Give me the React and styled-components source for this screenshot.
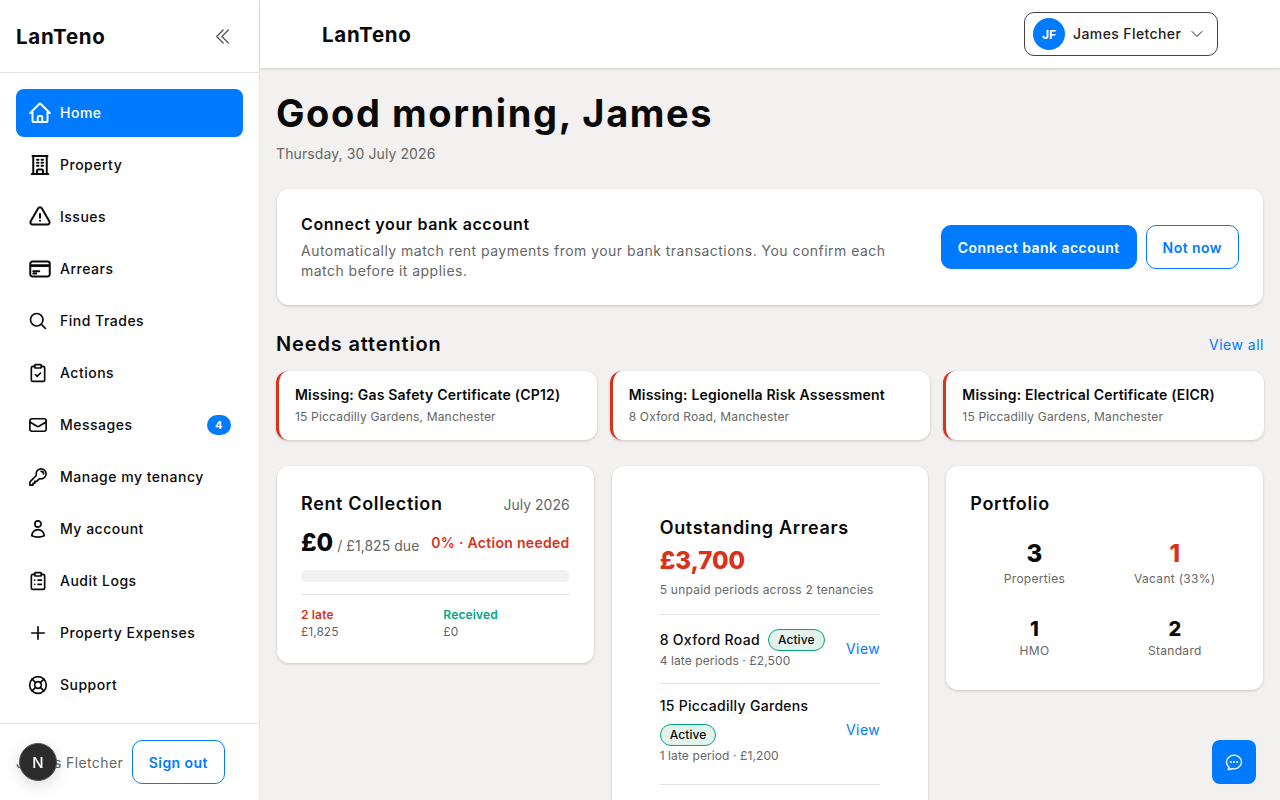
import React from "react";
import styled, { createGlobalStyle } from "styled-components";
import {
  HiOutlineHome,
  HiOutlineBuildingOffice,
  HiOutlineExclamationTriangle,
  HiOutlineCreditCard,
  HiOutlineMagnifyingGlass,
  HiOutlineEnvelope,
  HiOutlineKey,
  HiOutlineUser,
  HiOutlinePlus,
  HiOutlineChevronDoubleLeft,
  HiOutlineChevronDown,
  HiOutlineChatBubbleOvalLeftEllipsis,
} from "react-icons/hi2";
import { ClipboardCheck, ClipboardList, LifeBuoy } from "lucide-react";

const BLUE = "#007aff";
const RED = "#d9321c";
const GREEN = "#00a67e";
const INK = "#0a0a0a";
const MUTED = "#666666";
const LINE = "#e4e4e4";

const GlobalStyle = createGlobalStyle`
  html, body { margin: 0; height: 100%; overflow: hidden; }
  body {
    font-family: Inter, "Noto Sans", sans-serif;
    background: #f2f1ef;
    color: ${INK};
  }
  * { box-sizing: border-box; }
`;

const Shell = styled.div`
  display: flex;
  height: 100vh;
  overflow: hidden;
`;

const Sidebar = styled.aside`
  width: 260px;
  flex: none;
  background: #fff;
  border-right: 1px solid ${LINE};
  display: flex;
  flex-direction: column;
`;

const SideHead = styled.div`
  height: 73px;
  flex: none;
  border-bottom: 1px solid ${LINE};
  display: flex;
  align-items: center;
  justify-content: space-between;
  padding: 0 26px 0 16px;
  color: #555;
`;

const Logo = styled.div`
  font-size: 20.5px;
  font-weight: 700;
  letter-spacing: 0.75px;
  color: ${INK};
`;

const Nav = styled.nav`
  flex: 1;
  padding: 16px 16px 0;
  display: flex;
  flex-direction: column;
  gap: 4px;
`;

const NavItem = styled.a`
  height: 48px;
  flex: none;
  display: flex;
  align-items: center;
  padding: 0 12px;
  border-radius: 8px;
  font-size: 14px;
  font-weight: 450;
  letter-spacing: 0.5px;
  background: ${(p) => (p.$active ? BLUE : "transparent")};
  color: ${(p) => (p.$active ? "#fff" : INK)};
`;

const NavIcon = styled.span`
  width: 32px;
  flex: none;
  display: flex;
  align-items: center;
`;

const NavLabel = styled.span`
  flex: 1;
  padding-bottom: 1px;
  white-space: nowrap;
`;

const CountBadge = styled.span`
  width: 24px;
  height: 20px;
  border-radius: 10px;
  background: ${BLUE};
  color: #fff;
  font-size: 11px;
  font-weight: 700;
  display: flex;
  align-items: center;
  justify-content: center;
`;

const SideFoot = styled.div`
  height: 77px;
  flex: none;
  border-top: 1px solid ${LINE};
  display: flex;
  align-items: center;
  justify-content: space-between;
  padding: 0 34px 0 16px;
`;

const FootName = styled.span`
  font-size: 14px;
  letter-spacing: 0.4px;
  color: ${MUTED};
  white-space: nowrap;
`;

const OutlineButton = styled.button`
  height: 44px;
  padding: 0 16px;
  background: #fff;
  border: 1px solid ${BLUE};
  border-radius: 10px;
  color: ${BLUE};
  font: 600 14px Inter, sans-serif;
  letter-spacing: 0.45px;
  white-space: nowrap;
`;

const SolidButton = styled(OutlineButton)`
  background: ${BLUE};
  color: #fff;
`;

const DevBadge = styled.div`
  position: fixed;
  left: 19px;
  top: 743px;
  width: 38px;
  height: 38px;
  border-radius: 50%;
  background: #2b2b2b;
  border: 1px solid #555;
  color: #fff;
  font-size: 15px;
  font-weight: 500;
  display: flex;
  align-items: center;
  justify-content: center;
  box-shadow: 0 4px 16px rgba(0, 0, 0, 0.15);
`;

const ChatButton = styled.button`
  position: fixed;
  left: 1212px;
  top: 740px;
  width: 44px;
  height: 44px;
  border: 0;
  border-radius: 8px;
  background: ${BLUE};
  color: #fff;
  display: flex;
  align-items: center;
  justify-content: center;
  padding: 0;
`;

const Main = styled.div`
  flex: 1;
  min-width: 0;
  display: flex;
  flex-direction: column;
`;

const TopBar = styled.header`
  height: 68px;
  flex: none;
  background: #fff;
  box-shadow: 0 1px 3px rgba(0, 0, 0, 0.14);
  display: flex;
  align-items: center;
  justify-content: space-between;
  padding: 0 62px;
  position: relative;
`;

const UserMenu = styled.div`
  width: 194px;
  height: 44px;
  border: 1px solid #444;
  border-radius: 10px;
  display: flex;
  align-items: center;
  padding: 0 14px 0 8px;
  gap: 8px;
  font-size: 14px;
  font-weight: 450;
  letter-spacing: 0.4px;
  color: #222;
  svg { flex: none; }
`;

const Avatar = styled.span`
  width: 32px;
  height: 32px;
  flex: none;
  border-radius: 50%;
  background: ${BLUE};
  color: #fff;
  font-size: 12px;
  font-weight: 700;
  letter-spacing: 0;
  display: flex;
  align-items: center;
  justify-content: center;
`;

const Content = styled.main`
  flex: 1;
  min-height: 0;
  overflow: hidden;
  padding: 20px 16px 0;
`;

const Title = styled.h1`
  margin: 0;
  font-size: 38px;
  line-height: 50px;
  font-weight: 700;
  letter-spacing: 1.6px;
`;

const DateLine = styled.div`
  margin-top: 6px;
  font-size: 14px;
  line-height: 20px;
  letter-spacing: 0.1px;
  color: ${MUTED};
`;

const Card = styled.section`
  background: #fff;
  border-radius: 12px;
  box-shadow: 0 1px 3px rgba(0, 0, 0, 0.18);
`;

const BankCard = styled(Card)`
  margin: 25px 1px 0;
  height: 116px;
  padding: 0 24px;
  display: flex;
  align-items: center;
  gap: 40px;
`;

const BankText = styled.div`
  flex: 1;
`;

const BankTitle = styled.div`
  font-size: 16px;
  font-weight: 600;
  letter-spacing: 0.6px;
  margin-bottom: 7px;
`;

const BankBody = styled.div`
  font-size: 14px;
  line-height: 20px;
  letter-spacing: 0.47px;
  color: ${MUTED};
`;

const BankActions = styled.div`
  display: flex;
  gap: 9px;
  flex: none;
`;

const SectionHead = styled.div`
  margin-top: 25px;
  height: 28px;
  display: flex;
  align-items: center;
  justify-content: space-between;
`;

const SectionTitle = styled.h2`
  margin: 0;
  font-size: 20px;
  font-weight: 600;
  letter-spacing: 0.85px;
`;

const LinkText = styled.a`
  font-size: 14px;
  letter-spacing: 0.5px;
  color: ${BLUE};
`;

const ViewLink = styled(LinkText)`
  display: inline-block;
  padding-bottom: 2px;
`;

const AttentionGrid = styled.div`
  margin-top: 13px;
  display: grid;
  grid-template-columns: repeat(3, 1fr);
  gap: 13px;
`;

const AttentionCard = styled(Card)`
  height: 69px;
  border-left: 3px solid ${RED};
  padding: 14px 16px;
`;

const AttentionTitle = styled.div`
  font-size: 14px;
  font-weight: 600;
  line-height: 20px;
  letter-spacing: 0.2px;
`;

const AttentionSub = styled.div`
  margin-top: 3px;
  font-size: 12px;
  line-height: 18px;
  letter-spacing: 0.18px;
  color: ${MUTED};
`;

const Columns = styled.div`
  margin-top: 26px;
  display: grid;
  grid-template-columns: repeat(3, 1fr);
  gap: 18px;
  align-items: start;
  padding: 0 1px;
`;

const RentCard = styled(Card)`
  padding: 25px 24px 0;
  height: 197px;
`;

const SpreadRow = styled.div`
  display: flex;
  justify-content: space-between;
  align-items: center;
`;

const CardTitle = styled.h3`
  margin: 0;
  font-size: 18px;
  line-height: 26px;
  font-weight: 600;
  letter-spacing: 0.65px;
`;

const MonthText = styled.span`
  font-size: 14px;
  color: ${MUTED};
`;

const AmountRow = styled(SpreadRow)`
  margin-top: 9px;
  height: 32px;
`;

const Amount = styled.span`
  font-size: 24px;
  font-weight: 800;
`;

const DueText = styled.span`
  font-size: 14px;
  letter-spacing: 0.05px;
  color: ${MUTED};
  margin-left: 4px;
`;

const AlertText = styled.span`
  font-size: 14px;
  font-weight: 600;
  letter-spacing: 0.3px;
  color: ${RED};
`;

const Track = styled.div`
  margin-top: 12px;
  height: 12px;
  border-radius: 6px;
  background: #f2f1ef;
`;

const SplitRow = styled.div`
  margin-top: 12px;
  padding-top: 12px;
  border-top: 1px solid ${LINE};
  display: grid;
  grid-template-columns: 1fr 1fr;
  column-gap: 16px;
`;

const SplitLabel = styled.div`
  font-size: 12px;
  line-height: 16px;
  font-weight: 600;
  letter-spacing: 0.15px;
  color: ${(p) => p.$color};
`;

const SplitValue = styled.div`
  margin-top: 1px;
  font-size: 12px;
  line-height: 16px;
  color: ${MUTED};
`;

const ArrearsCard = styled(Card)`
  padding: 49px 48px 0;
  height: 420px;
`;

const BigRed = styled.div`
  margin-top: 3px;
  font-size: 24px;
  line-height: 34px;
  font-weight: 800;
  color: ${RED};
`;

const ArrearsNote = styled.div`
  margin-top: 3px;
  font-size: 12px;
  line-height: 18px;
  letter-spacing: 0.24px;
  color: ${MUTED};
`;

const ArrearsRow = styled.div`
  margin-top: ${(p) => (p.$first ? "15px" : "0")};
  border-top: 1px solid ${LINE};
  padding: ${(p) => p.$top}px 0 ${(p) => p.$bottom}px;
  display: flex;
  align-items: center;
  justify-content: space-between;
`;

const RowName = styled.div`
  display: flex;
  flex-wrap: wrap;
  align-items: center;
  column-gap: 8px;
  row-gap: 8px;
  font-size: 14px;
  line-height: 20px;
  letter-spacing: 0.3px;
  font-weight: 500;
`;

const StatusPill = styled.span`
  height: 22px;
  padding: 0 9px;
  border: 1px solid ${GREEN};
  border-radius: 11px;
  background: #e3f2ec;
  font-size: 12px;
  font-weight: 500;
  letter-spacing: 0.1px;
  line-height: 20px;
`;

const RowMeta = styled.div`
  margin-top: 1px;
  font-size: 12px;
  line-height: 18px;
  letter-spacing: 0.1px;
  color: ${MUTED};
`;

const PortfolioCard = styled(Card)`
  padding: 25px 24px 0;
  height: 224px;
`;

const StatGrid = styled.div`
  margin-top: 23px;
  display: grid;
  grid-template-columns: 1fr 1fr;
  column-gap: 12px;
  row-gap: 27px;
`;

const Stat = styled.div`
  text-align: center;
`;

const StatValue = styled.div`
  font-size: ${(p) => p.$size}px;
  line-height: 28px;
  font-weight: 800;
  margin-bottom: ${(p) => p.$gap}px;
  color: ${(p) => p.$color || INK};
`;

const StatLabel = styled.div`
  font-size: 12px;
  line-height: 18px;
  letter-spacing: 0.3px;
  color: ${MUTED};
`;

const navItems = [
  { label: "Home", icon: HiOutlineHome, size: 24, active: true },
  { label: "Property", icon: HiOutlineBuildingOffice, size: 24 },
  { label: "Issues", icon: HiOutlineExclamationTriangle, size: 24 },
  { label: "Arrears", icon: HiOutlineCreditCard, size: 24 },
  { label: "Find Trades", icon: HiOutlineMagnifyingGlass, size: 20 },
  { label: "Actions", icon: ClipboardCheck, size: 20 },
  { label: "Messages", icon: HiOutlineEnvelope, size: 20, count: 4 },
  { label: "Manage my tenancy", icon: HiOutlineKey, size: 20 },
  { label: "My account", icon: HiOutlineUser, size: 20 },
  { label: "Audit Logs", icon: ClipboardList, size: 20 },
  { label: "Property Expenses", icon: HiOutlinePlus, size: 20 },
  { label: "Support", icon: LifeBuoy, size: 20 },
];

const missing = [
  { title: "Missing: Gas Safety Certificate (CP12)", place: "15 Piccadilly Gardens, Manchester" },
  { title: "Missing: Legionella Risk Assessment", place: "8 Oxford Road, Manchester" },
  { title: "Missing: Electrical Certificate (EICR)", place: "15 Piccadilly Gardens, Manchester" },
];

const stats = [
  { value: 3, label: "Properties", size: 24, gap: 2 },
  { value: 1, label: "Vacant (33%)", size: 24, gap: 2, color: RED },
  { value: 1, label: "HMO", size: 20, gap: -1 },
  { value: 2, label: "Standard", size: 20, gap: -1 },
];

const App = () => {
  return (
    <>
      <GlobalStyle />
      <Shell>
        <Sidebar>
          <SideHead>
            <Logo>LanTeno</Logo>
            <HiOutlineChevronDoubleLeft size={21} />
          </SideHead>
          <Nav>
            {navItems.map((item) => (
              <NavItem key={item.label} $active={item.active}>
                <NavIcon>
                  <item.icon size={item.size} strokeWidth={2} />
                </NavIcon>
                <NavLabel>{item.label}</NavLabel>
                {item.count && <CountBadge>{item.count}</CountBadge>}
              </NavItem>
            ))}
          </Nav>
          <SideFoot>
            <FootName>James Fletcher</FootName>
            <OutlineButton>Sign out</OutlineButton>
          </SideFoot>
        </Sidebar>

        <Main>
          <TopBar>
            <Logo>LanTeno</Logo>
            <UserMenu>
              <Avatar>JF</Avatar>
              <NavLabel>James Fletcher</NavLabel>
              <HiOutlineChevronDown size={16} />
            </UserMenu>
          </TopBar>
          <Content>
            <Title>Good morning, James</Title>
            <DateLine>Thursday, 30 July 2026</DateLine>

            <BankCard>
              <BankText>
                <BankTitle>Connect your bank account</BankTitle>
                <BankBody>
                  Automatically match rent payments from your bank transactions. You confirm each
                  match before it applies.
                </BankBody>
              </BankText>
              <BankActions>
                <SolidButton>Connect bank account</SolidButton>
                <OutlineButton>Not now</OutlineButton>
              </BankActions>
            </BankCard>

            <SectionHead>
              <SectionTitle>Needs attention</SectionTitle>
              <LinkText>View all</LinkText>
            </SectionHead>
            <AttentionGrid>
              {missing.map((m) => (
                <AttentionCard key={m.title}>
                  <AttentionTitle>{m.title}</AttentionTitle>
                  <AttentionSub>{m.place}</AttentionSub>
                </AttentionCard>
              ))}
            </AttentionGrid>

            <Columns>
              <RentCard>
                <SpreadRow>
                  <CardTitle>Rent Collection</CardTitle>
                  <MonthText>July 2026</MonthText>
                </SpreadRow>
                <AmountRow>
                  <span>
                    <Amount>£0</Amount>
                    <DueText>/ £1,825 due</DueText>
                  </span>
                  <AlertText>0% · Action needed</AlertText>
                </AmountRow>
                <Track />
                <SplitRow>
                  <div>
                    <SplitLabel $color={RED}>2 late</SplitLabel>
                    <SplitValue>£1,825</SplitValue>
                  </div>
                  <div>
                    <SplitLabel $color={GREEN}>Received</SplitLabel>
                    <SplitValue>£0</SplitValue>
                  </div>
                </SplitRow>
              </RentCard>

              <ArrearsCard>
                <CardTitle>Outstanding Arrears</CardTitle>
                <BigRed>£3,700</BigRed>
                <ArrearsNote>5 unpaid periods across 2 tenancies</ArrearsNote>
                <ArrearsRow $first $top={14} $bottom={13}>
                  <div>
                    <RowName>
                      8 Oxford Road <StatusPill>Active</StatusPill>
                    </RowName>
                    <RowMeta>4 late periods · £2,500</RowMeta>
                  </div>
                  <ViewLink>View</ViewLink>
                </ArrearsRow>
                <ArrearsRow $top={12} $bottom={19}>
                  <div>
                    <RowName>
                      15 Piccadilly Gardens <StatusPill>Active</StatusPill>
                    </RowName>
                    <RowMeta>1 late period · £1,200</RowMeta>
                  </div>
                  <ViewLink>View</ViewLink>
                </ArrearsRow>
                <ArrearsRow $top={14} $bottom={20} />
              </ArrearsCard>

              <PortfolioCard>
                <CardTitle>Portfolio</CardTitle>
                <StatGrid>
                  {stats.map((s) => (
                    <Stat key={s.label}>
                      <StatValue $size={s.size} $gap={s.gap} $color={s.color}>
                        {s.value}
                      </StatValue>
                      <StatLabel>{s.label}</StatLabel>
                    </Stat>
                  ))}
                </StatGrid>
              </PortfolioCard>
            </Columns>
          </Content>
        </Main>
      </Shell>
      <DevBadge>N</DevBadge>
      <ChatButton>
        <HiOutlineChatBubbleOvalLeftEllipsis size={20} strokeWidth={1.6} />
      </ChatButton>
    </>
  );
};

export default App;
